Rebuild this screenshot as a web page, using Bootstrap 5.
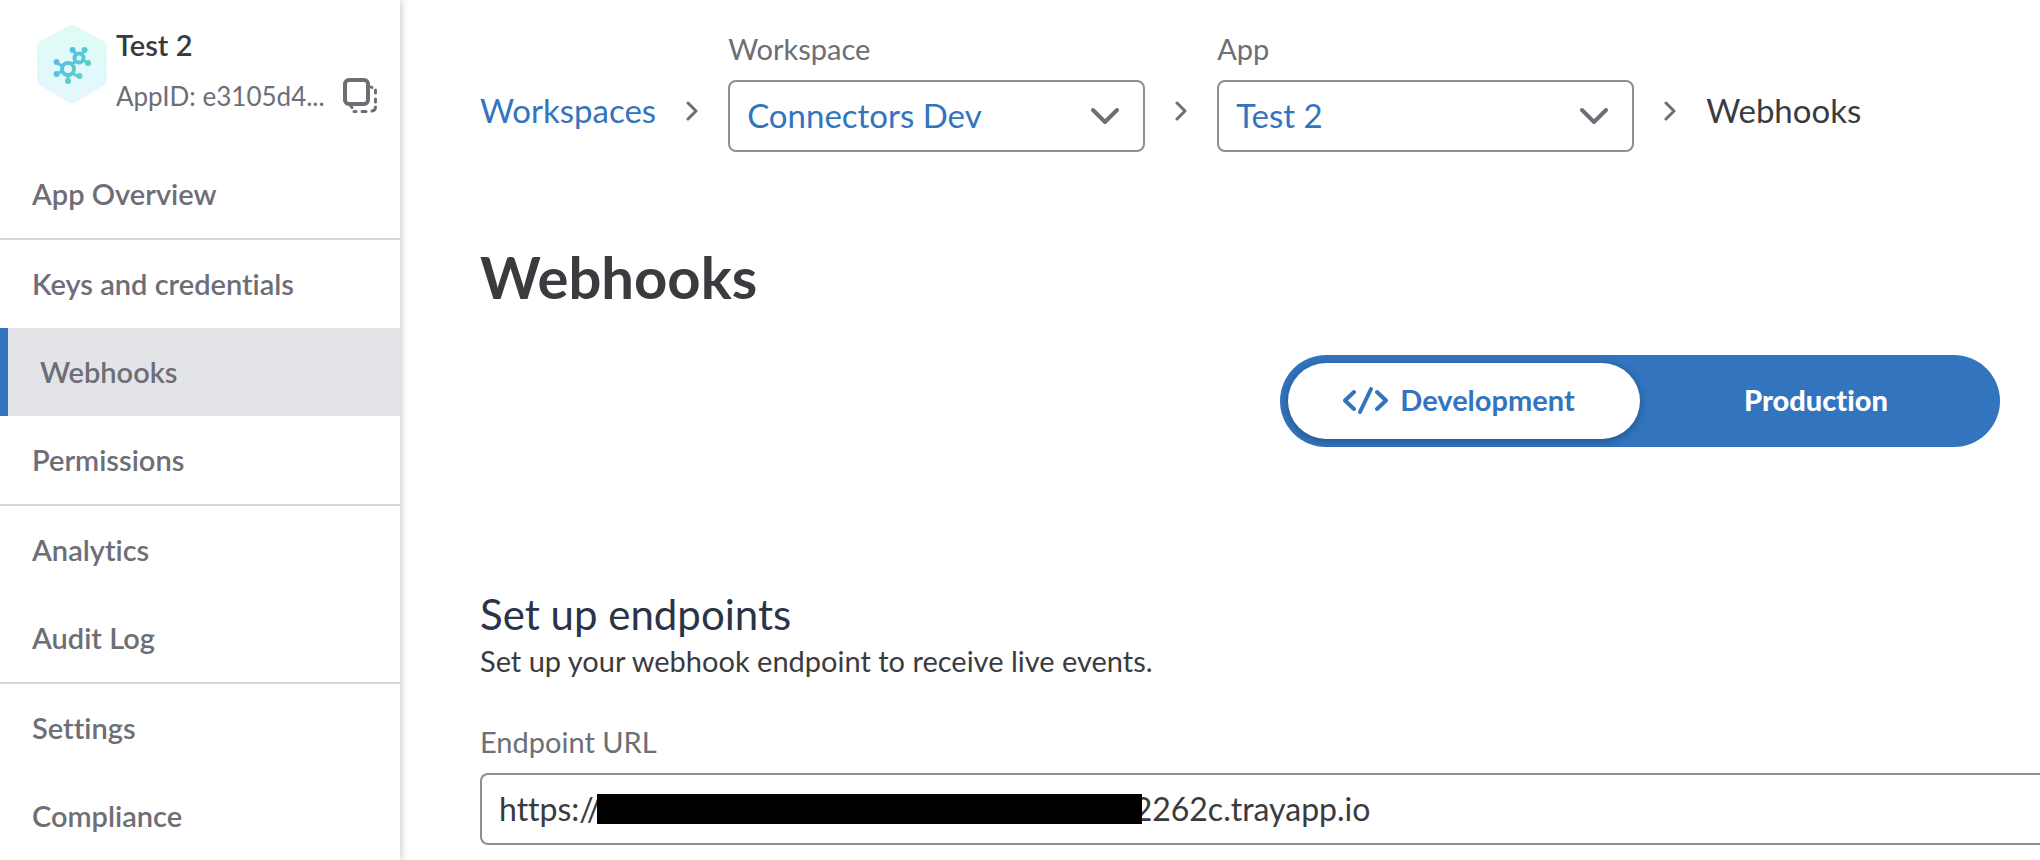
<!DOCTYPE html>
<html lang="en">
<head>
<meta charset="utf-8">
<meta name="viewport" content="width=device-width, initial-scale=1">
<title>Webhooks</title>
<link href="https://cdn.jsdelivr.net/npm/bootstrap@5.3.0/dist/css/bootstrap.min.css" rel="stylesheet">
<style>
  :root { --brand: #3274be; --ink: #3a3b3f; --soft: #6d6e76; --edge: #8e8e96; }
  body { font-family: Lato, "Open Sans", sans-serif; font-size: 29px; line-height: 40px; color: var(--ink); background: #fff; overflow-x: hidden; }
  body, button, input, select { font-variant-ligatures: none; }
  svg { display: block; flex: none; }

  .side { flex: 0 0 400px; box-shadow: 0 0 8px rgba(0, 0, 0, .28); background: #fff; z-index: 1; }
  .side-head { padding: 25px 22px 34px 36px; gap: 8px; }
  .app-name { font-weight: 600; margin-bottom: 11px; }
  .app-id { font-size: 26px; color: var(--soft); }
  .side-nav .nav-link { padding: 24px 32px; font-weight: 600; color: var(--soft); }
  .side-nav .nav-link.active { background: #e3e4e8; border-left: 8px solid var(--brand); }
  .side-nav li + .group-start { border-top: 2px solid #d6d6dc; }

  .content { min-width: 0; padding: 29px 0 12px 80px; overflow: hidden; }
  .crumbs { gap: 30px; font-size: 33px; }
  .crumbs > .crumb { padding-bottom: 22px; }
  .crumbs > svg { margin-bottom: 31px; }
  .crumbs a { color: var(--brand); text-decoration: none; }
  .field-label { display: block; font-size: 29px; color: var(--soft); margin-bottom: 11px; }
  .picker { width: 417px; height: 72px; padding: 0 70px 2px 17px; border: 2px solid var(--edge); border-radius: 8px; font-size: 33px; line-height: 40px; color: var(--brand);
    background: #fff url("data:image/svg+xml,%3Csvg xmlns='http://www.w3.org/2000/svg' viewBox='0 0 28 18'%3E%3Cpath d='M2 3l12 12L26 3' fill='none' stroke='%236d6e76' stroke-width='4' stroke-linecap='round' stroke-linejoin='round'/%3E%3C/svg%3E") no-repeat right 24px center / 28px 18px; }

  .page-title { font-size: 58px; line-height: 72px; font-weight: 700; margin: 89px 0 42px; }
  .switcher { width: 720px; height: 92px; padding: 8px; border-radius: 46px; background: var(--brand); margin-right: 40px; }
  .switcher .btn { height: 76px; border: 0; border-radius: 38px; font-size: 29px; font-weight: 900; color: #fff; padding: 0 0 2px; }
  .switcher .btn.active { background: #fff; color: var(--brand); font-weight: 700; padding-right: 10px; gap: 12px; box-shadow: 0 2px 8px rgba(0, 0, 0, .3); }

  .section-title { font-size: 42px; line-height: 54px; font-weight: 400; color: #2b3347; margin: 140px 0 0; }
  .endpoint-field { margin-top: 41px; }
  .url-box { height: 72px; padding: 0 17px 2px; border: 2px solid var(--edge); border-right: 0; border-radius: 8px 0 0 8px; font-size: 32px; color: var(--ink); }
  .redaction { left: 117px; top: 21px; width: 545px; height: 30px; background: #000; }
</style>
</head>
<body>
<div class="d-flex min-vh-100">
  <aside class="side">
    <header class="side-head d-flex">
      <svg width="72" height="78" viewBox="0 0 72 78" aria-hidden="true">
        <defs>
          <linearGradient id="hex" x1="0" y1="0" x2="0" y2="1"><stop offset="0" stop-color="#ddfcf4"/><stop offset="1" stop-color="#e4f7ff"/></linearGradient>
          <linearGradient id="mol" gradientUnits="userSpaceOnUse" x1="18" y1="30" x2="48" y2="52"><stop offset="0" stop-color="#57b9ee"/><stop offset="1" stop-color="#5cd2c4"/></linearGradient>
        </defs>
        <path d="M32 1Q36-1 40 1L67 16Q71 18 71 23V54Q71 58 67 61L40 77Q36 79 32 77L5 61Q1 58 1 54V23Q1 18 5 16Z" fill="url(#hex)"/>
        <g fill="none" stroke="url(#mol)" stroke-width="4">
          <circle cx="32" cy="44" r="6"/><circle cx="43" cy="33" r="4.500"/>
          <path d="M36 39l4-3M40 29l-3-4M46 29l3-4M47 35l5 3M26 41l-5-3M26 46l-5 3M32 50v6M36 48l7 4" stroke-width="3"/>
        </g>
        <g fill="url(#mol)">
          <circle cx="36.500" cy="25" r="3"/><circle cx="48.500" cy="25" r="3"/><circle cx="52" cy="38" r="3"/><circle cx="20.500" cy="37" r="3"/><circle cx="20.500" cy="49" r="3"/><circle cx="32" cy="56" r="3"/><circle cx="43.500" cy="51" r="3"/>
        </g>
      </svg>
      <div class="flex-grow-1">
        <div class="app-name">Test 2</div>
        <div class="d-flex align-items-center justify-content-between">
          <span class="app-id">AppID: e3105d4...</span>
          <button type="button" class="btn p-0 border-0" aria-label="Copy app ID">
            <svg width="35" height="36" viewBox="0 0 35 36" fill="none" stroke="#6d6e76" stroke-width="4" stroke-linecap="round">
              <rect x="2" y="2" width="23" height="24" rx="4"/>
              <path d="M28 9l1 .5M32.500 12v3M32.500 21v3M32.500 29q0 3.500-3.500 4M23 33.500h-4M13 33.500h-2M8 28.500l1 1" stroke-width="3"/>
            </svg>
          </button>
        </div>
      </div>
    </header>
    <nav>
      <ul class="side-nav nav flex-column">
        <li><a class="nav-link" href="#">App Overview</a></li>
        <li class="group-start"><a class="nav-link" href="#">Keys and credentials</a></li>
        <li><a class="nav-link active" href="#" aria-current="page">Webhooks</a></li>
        <li><a class="nav-link" href="#">Permissions</a></li>
        <li class="group-start"><a class="nav-link" href="#">Analytics</a></li>
        <li><a class="nav-link" href="#">Audit Log</a></li>
        <li class="group-start"><a class="nav-link" href="#">Settings</a></li>
        <li><a class="nav-link" href="#">Compliance</a></li>
      </ul>
    </nav>
  </aside>

  <main class="content flex-grow-1">
    <nav class="crumbs d-flex align-items-end" aria-label="Breadcrumb">
      <a class="crumb" href="#">Workspaces</a>
      <svg width="12" height="20" viewBox="0 0 12 20" fill="none" stroke="#6d6e76" stroke-width="3" stroke-linecap="round" stroke-linejoin="round"><path d="M2 2l8 8-8 8"/></svg>
      <div>
        <label class="field-label" for="workspace">Workspace</label>
        <select class="picker form-select" id="workspace"><option>Connectors Dev</option></select>
      </div>
      <svg width="12" height="20" viewBox="0 0 12 20" fill="none" stroke="#6d6e76" stroke-width="3" stroke-linecap="round" stroke-linejoin="round"><path d="M2 2l8 8-8 8"/></svg>
      <div>
        <label class="field-label" for="app">App</label>
        <select class="picker form-select" id="app"><option>Test 2</option></select>
      </div>
      <svg width="12" height="20" viewBox="0 0 12 20" fill="none" stroke="#6d6e76" stroke-width="3" stroke-linecap="round" stroke-linejoin="round"><path d="M2 2l8 8-8 8"/></svg>
      <span class="crumb">Webhooks</span>
    </nav>

    <h1 class="page-title">Webhooks</h1>

    <div class="switcher d-flex ms-auto" role="group" aria-label="Environment">
      <button type="button" class="btn active w-50 d-flex align-items-center justify-content-center" aria-pressed="true">
        <svg width="45" height="30" viewBox="0 0 45 30" fill="none" stroke="#3274be" stroke-width="4" stroke-linecap="round" stroke-linejoin="round"><path d="M11 7L2 15.500l9 8.500M34 7l9 8.500-9 8.500M28 4L17 27"/></svg>
        Development
      </button>
      <button type="button" class="btn w-50" aria-pressed="false">Production</button>
    </div>

    <section>
      <h2 class="section-title">Set up endpoints</h2>
      <p class="mb-0">Set up your webhook endpoint to receive live events.</p>
      <div class="endpoint-field">
        <label class="field-label" for="endpoint">Endpoint URL</label>
        <div class="position-relative">
          <input class="url-box form-control" id="endpoint" type="text" value="https://&nbsp;&nbsp;&nbsp;&nbsp;&nbsp;&nbsp;&nbsp;&nbsp;&nbsp;&nbsp;&nbsp;&nbsp;&nbsp;&nbsp;&nbsp;&nbsp;&nbsp;&nbsp;&nbsp;&nbsp;&nbsp;&nbsp;&nbsp;&nbsp;&nbsp;&nbsp;&nbsp;&nbsp;&nbsp;&nbsp;&nbsp;&nbsp;&nbsp;&nbsp;&nbsp;&nbsp;&nbsp;&nbsp;&nbsp;&nbsp;&nbsp;&nbsp;&nbsp;&nbsp;&nbsp;&nbsp;&nbsp;&nbsp;&nbsp;&nbsp;&nbsp;&nbsp;&nbsp;&nbsp;&nbsp;&nbsp;&nbsp;&nbsp;&nbsp;&nbsp;&nbsp;&nbsp;&nbsp;&nbsp;&nbsp;2262c.trayapp.io">
          <span class="redaction position-absolute"></span>
        </div>
      </div>
    </section>
  </main>
</div>
<script src="https://cdn.jsdelivr.net/npm/bootstrap@5.3.0/dist/js/bootstrap.bundle.min.js"></script>
</body>
</html>
